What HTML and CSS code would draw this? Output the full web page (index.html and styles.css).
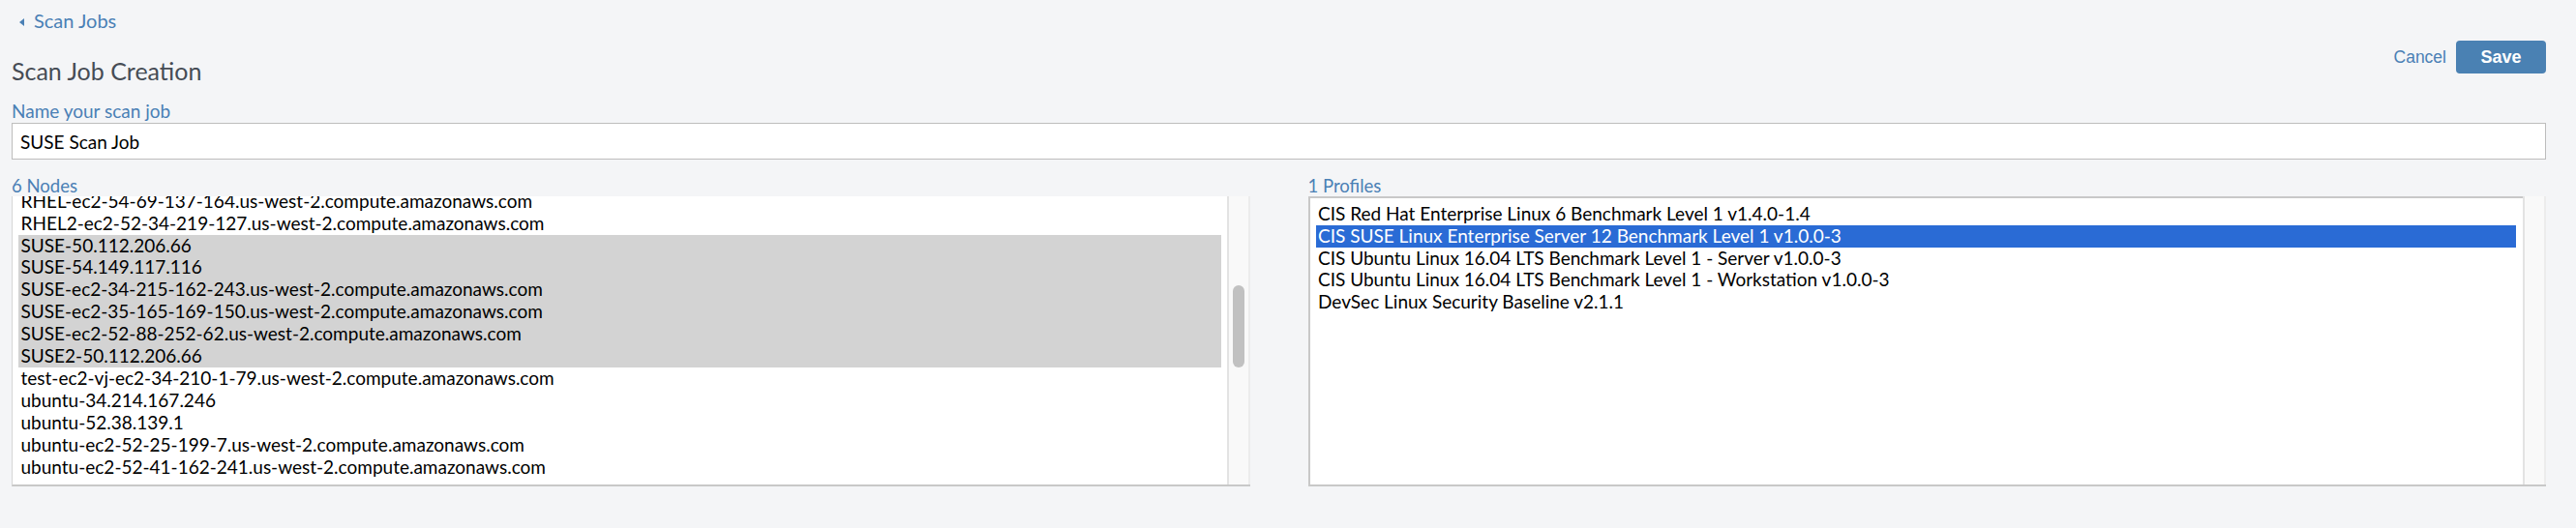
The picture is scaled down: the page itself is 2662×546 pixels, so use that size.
FILE: index.html
```html
<!DOCTYPE html>
<html lang="en">
<head>
<meta charset="utf-8">
<title>Scan Job Creation</title>
<link rel="stylesheet" href="styles.css">
</head>
<body>
<div class="page">
  <div class="head">
    <div class="head-main">
      <a class="back" href="#"><span class="caret"></span>Scan Jobs</a>
      <h1 class="title">Scan Job Creation</h1>
    </div>
    <div class="actions">
      <a class="cancel" href="#">Cancel</a>
      <button class="save" type="button">Save</button>
    </div>
  </div>

  <label class="field-label" for="jobname">Name your scan job</label>
  <input class="text-input" id="jobname" type="text" value="SUSE Scan Job">

  <div class="lists">
    <div class="col">
      <div class="col-label">6 Nodes</div>
      <div class="listbox listbox-nodes">
        <div class="viewport">
          <ul class="options options-scrolled">
            <li>RHEL-ec2-54-69-137-164.us-west-2.compute.amazonaws.com</li>
            <li>RHEL2-ec2-52-34-219-127.us-west-2.compute.amazonaws.com</li>
            <li class="sel">SUSE-50.112.206.66</li>
            <li class="sel">SUSE-54.149.117.116</li>
            <li class="sel">SUSE-ec2-34-215-162-243.us-west-2.compute.amazonaws.com</li>
            <li class="sel">SUSE-ec2-35-165-169-150.us-west-2.compute.amazonaws.com</li>
            <li class="sel">SUSE-ec2-52-88-252-62.us-west-2.compute.amazonaws.com</li>
            <li class="sel">SUSE2-50.112.206.66</li>
            <li>test-ec2-vj-ec2-34-210-1-79.us-west-2.compute.amazonaws.com</li>
            <li>ubuntu-34.214.167.246</li>
            <li>ubuntu-52.38.139.1</li>
            <li>ubuntu-ec2-52-25-199-7.us-west-2.compute.amazonaws.com</li>
            <li>ubuntu-ec2-52-41-162-241.us-west-2.compute.amazonaws.com</li>
          </ul>
        </div>
        <div class="track"><div class="thumb"></div></div>
      </div>
    </div>
    <div class="col">
      <div class="col-label">1 Profiles</div>
      <div class="listbox listbox-profiles">
        <div class="viewport">
          <ul class="options options-top">
            <li>CIS Red Hat Enterprise Linux 6 Benchmark Level 1 v1.4.0-1.4</li>
            <li class="active">CIS SUSE Linux Enterprise Server 12 Benchmark Level 1 v1.0.0-3</li>
            <li>CIS Ubuntu Linux 16.04 LTS Benchmark Level 1 - Server v1.0.0-3</li>
            <li>CIS Ubuntu Linux 16.04 LTS Benchmark Level 1 - Workstation v1.0.0-3</li>
            <li>DevSec Linux Security Baseline v2.1.1</li>
          </ul>
        </div>
        <div class="track"></div>
      </div>
    </div>
  </div>
</div>
</body>
</html>
```

FILE: styles.css
```css
* { box-sizing: border-box; }

html, body {
  margin: 0;
  padding: 0;
  background: #f4f5f7;
}

body {
  font-family: Lato, "Noto Sans", sans-serif;
  color: #000;
}

.page {
  padding: 10px 31px 0 12px;
}

.head {
  display: flex;
  justify-content: space-between;
  align-items: flex-start;
}

.back {
  display: flex;
  align-items: center;
  gap: 10px;
  height: 22px;
  font-size: 20px;
  line-height: 22px;
  color: #4a80b5;
  text-decoration: none;
  padding-left: 8px;
}

.caret {
  width: 0;
  height: 0;
  border-top: 4px solid transparent;
  border-bottom: 4px solid transparent;
  border-right: 5px solid #4a80b5;
  margin-top: 3px;
}

.title {
  margin: 26px 0 0;
  font-size: 25px;
  line-height: 30px;
  font-weight: 400;
  color: #464c55;
}

.actions {
  display: flex;
  align-items: center;
  gap: 10px;
  margin-top: 32px;
}

.cancel {
  font-family: "Liberation Sans", Arial, sans-serif;
  font-size: 17.5px;
  color: #4a80b5;
  text-decoration: none;
}

.save {
  width: 93px;
  height: 34px;
  border: 0;
  border-radius: 4px;
  background: #4a81b3;
  color: #fff;
  font-family: "Liberation Sans", Arial, sans-serif;
  font-weight: 700;
  font-size: 18px;
  padding: 0;
}

.field-label {
  display: block;
  margin-top: 15px;
  font-size: 19px;
  line-height: 23px;
  color: #4a80b5;
}

.text-input {
  display: block;
  width: 100%;
  height: 38px;
  margin: 1px 0 0;
  padding: 0 8px;
  border: 1px solid #bdbdbd;
  background: #fff;
  font-family: Lato, "Noto Sans", sans-serif;
  font-size: 19px;
  color: #000;
  outline: none;
}

.lists {
  display: grid;
  grid-template-columns: 1fr 1fr;
  gap: 60px;
  margin-top: 16px;
}

.col-label {
  font-size: 18.5px;
  line-height: 23px;
  color: #4a80b5;
  margin-bottom: -1px;
}

.listbox {
  display: flex;
  height: 300px;
  background: #fff;
  border-bottom: 2px solid #c8c8c8;
}

.listbox-nodes {
  border-left: 1px solid #d6d6d6;
}

.listbox-profiles {
  border-left: 2px solid #c8c8c8;
}

.viewport {
  flex: 1;
  overflow: hidden;
  min-width: 0;
}

.listbox-profiles .viewport {
  border-top: 2px solid #c8c8c8;
}

.options {
  list-style: none;
  margin: 0;
  font-size: 19px;
  line-height: 22.9px;
}

.options-scrolled {
  margin-top: -6.2px;
  padding: 0 6px;
}

.options-top {
  padding: 4.8px 7px 0 6px;
}

.options li {
  height: 22.9px;
  padding-left: 2.5px;
  white-space: nowrap;
}

.options li.sel {
  background: #d3d3d3;
}

.options li.active {
  background: #2a6bd5;
  color: #fff;
}

.track {
  width: 24px;
  background: #f9f9f9;
  border-left: 2px solid #e3e3e3;
  border-right: 2px solid #ececec;
  display: flex;
  flex-direction: column;
}

.thumb {
  width: 12px;
  height: 85px;
  margin: 92px 0 0 4px;
  border-radius: 6px;
  background: #c1c1c1;
}
```
